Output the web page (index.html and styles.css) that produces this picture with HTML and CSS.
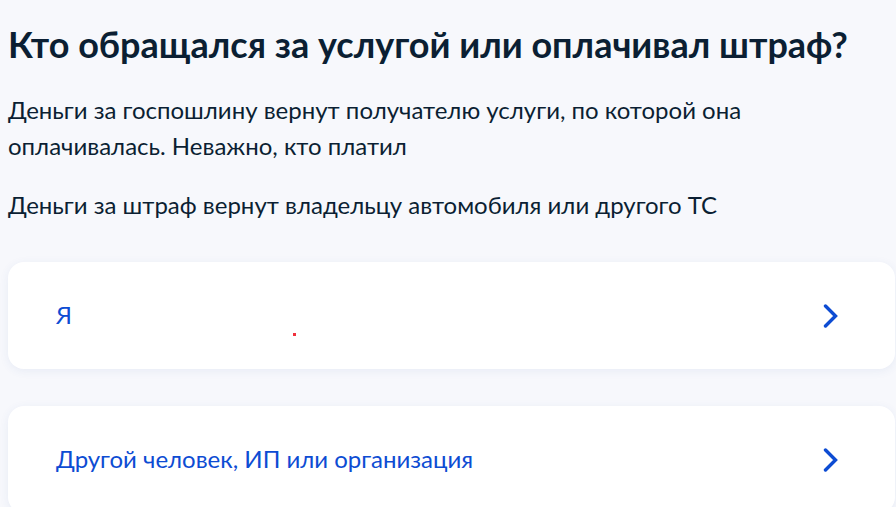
FILE: index.html
```html
<!DOCTYPE html>
<html lang="ru">
<head>
<meta charset="utf-8">
<link rel="stylesheet" href="styles.css">
</head>
<body>
<main class="page">
  <h1 class="title">Кто обращался за услугой или оплачивал штраф?</h1>
  <p class="text">Деньги за госпошлину вернут получателю услуги, по которой она оплачивалась. Неважно, кто платил</p>
  <p class="text">Деньги за штраф вернут владельцу автомобиля или другого ТС</p>
  <div class="options">
    <a class="card" href="#">
      <span class="card-label">Я</span>
      <span class="dot"></span>
      <svg class="chevron" width="15" height="24" viewBox="0 0 15 24"><path d="M2.5 2 L12.5 12 L2.5 22" fill="none" stroke="#0d4cd3" stroke-width="3.4" stroke-linecap="round" stroke-linejoin="miter"/></svg>
    </a>
    <a class="card" href="#">
      <span class="card-label">Другой человек, ИП или организация</span>
      <svg class="chevron" width="15" height="24" viewBox="0 0 15 24"><path d="M2.5 2 L12.5 12 L2.5 22" fill="none" stroke="#0d4cd3" stroke-width="3.4" stroke-linecap="round" stroke-linejoin="miter"/></svg>
    </a>
  </div>
</main>
</body>
</html>
```
FILE: styles.css
```css
html, body {
  margin: 0;
  padding: 0;
  background: #f7f8fc;
}
body {
  font-family: Lato, "Noto Sans", sans-serif;
  color: #0b1f33;
  overflow: hidden;
}
.page {
  padding: 20px 1px 0 8px;
}
.title {
  margin: 0;
  font-size: 36px;
  line-height: 48px;
  font-weight: 700;
  letter-spacing: 0;
}
.text {
  margin: 24px 0 0;
  max-width: 850px;
  font-size: 24px;
  line-height: 36px;
}
.text + .text {
  margin-top: 23px;
}
.options {
  margin-top: 39px;
  display: flex;
  flex-direction: column;
  gap: 37px;
}
.card {
  position: relative;
  display: flex;
  align-items: center;
  justify-content: space-between;
  height: 107px;
  padding: 0 57px 0 48px;
  background: #ffffff;
  border-radius: 16px;
  box-shadow: 0 2px 10px rgba(46, 88, 171, 0.08);
  text-decoration: none;
  color: #0d4cd3;
  font-size: 24px;
}
.card-label {
  line-height: 28px;
  padding-bottom: 2px;
}
.dot {
  position: absolute;
  left: 285px;
  top: 71px;
  width: 3px;
  height: 3px;
  background: #f0303c;
}
.chevron {
  display: block;
}
```
